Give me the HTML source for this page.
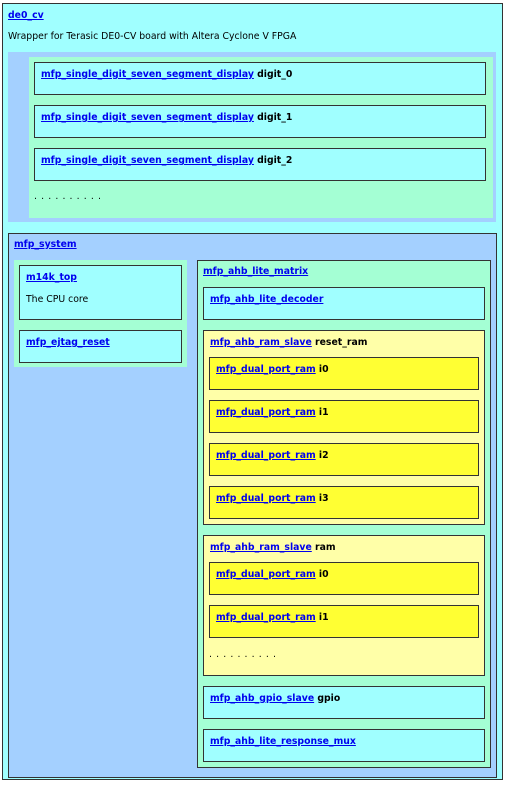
<!DOCTYPE html>
<html><head><meta charset="utf-8"><style>
*{box-sizing:border-box;margin:0;padding:0}
body{width:506px;height:785px;background:#fff;font-family:"DejaVu Sans","Liberation Sans",sans-serif;font-size:9.3px;position:relative;overflow:hidden}
.b{position:absolute}
.bd{border:1px solid #333}
.c{background:#a0ffff}.g{background:#a4ffd4}.bl{background:#a4d0ff}.ly{background:#ffffa8}.y{background:#ffff33}
.t{position:absolute;left:6px;top:6px;line-height:12px;font-weight:bold;white-space:nowrap;color:#000}
a{color:#0000ee;text-decoration:underline}
.p{position:absolute;white-space:nowrap;line-height:12px}
.d{letter-spacing:0.6px}
</style></head><body>
<div class="b bd c" style="left:2px;top:3px;width:501px;height:777px"></div>
<div class="p" style="left:8px;top:10px;font-weight:bold"><a>de0_cv</a></div>
<div class="p" style="left:8px;top:31px">Wrapper for Terasic DE0-CV board with Altera Cyclone V FPGA</div>
<div class="b bl" style="left:8px;top:52px;width:488px;height:170px"></div>
<div class="b g" style="left:29px;top:57px;width:464px;height:161px"></div>
<div class="b bd c" style="left:34px;top:62px;width:452px;height:33px"><div class="t"><a>mfp_single_digit_seven_segment_display</a> digit_0</div></div>
<div class="b bd c" style="left:34px;top:105px;width:452px;height:33px"><div class="t"><a>mfp_single_digit_seven_segment_display</a> digit_1</div></div>
<div class="b bd c" style="left:34px;top:148px;width:452px;height:33px"><div class="t"><a>mfp_single_digit_seven_segment_display</a> digit_2</div></div>
<div class="p d" style="left:34px;top:191px">. . . . . . . . . .</div>

<div class="b bd bl" style="left:8px;top:233px;width:489px;height:545px"></div>
<div class="p" style="left:14px;top:239px;font-weight:bold"><a>mfp_system</a></div>
<div class="b g" style="left:14px;top:260px;width:173px;height:107px"></div>
<div class="b bd c" style="left:19px;top:265px;width:163px;height:55px"><div class="t"><a>m14k_top</a></div><div class="p" style="left:6px;top:28px">The CPU core</div></div>
<div class="b bd c" style="left:19px;top:330px;width:163px;height:33px"><div class="t"><a>mfp_ejtag_reset</a></div></div>

<div class="b bd g" style="left:197px;top:260px;width:294px;height:508px"></div>
<div class="p" style="left:203px;top:266px;font-weight:bold"><a>mfp_ahb_lite_matrix</a></div>
<div class="b bd c" style="left:203px;top:287px;width:282px;height:33px"><div class="t"><a>mfp_ahb_lite_decoder</a></div></div>
<div class="b bd ly" style="left:203px;top:330px;width:282px;height:195px"><div class="t"><a>mfp_ahb_ram_slave</a> reset_ram</div></div>
<div class="b bd y" style="left:209px;top:357px;width:270px;height:33px"><div class="t"><a>mfp_dual_port_ram</a> i0</div></div>
<div class="b bd y" style="left:209px;top:400px;width:270px;height:33px"><div class="t"><a>mfp_dual_port_ram</a> i1</div></div>
<div class="b bd y" style="left:209px;top:443px;width:270px;height:33px"><div class="t"><a>mfp_dual_port_ram</a> i2</div></div>
<div class="b bd y" style="left:209px;top:486px;width:270px;height:33px"><div class="t"><a>mfp_dual_port_ram</a> i3</div></div>
<div class="b bd ly" style="left:203px;top:535px;width:282px;height:141px"><div class="t"><a>mfp_ahb_ram_slave</a> ram</div></div>
<div class="b bd y" style="left:209px;top:562px;width:270px;height:33px"><div class="t"><a>mfp_dual_port_ram</a> i0</div></div>
<div class="b bd y" style="left:209px;top:605px;width:270px;height:33px"><div class="t"><a>mfp_dual_port_ram</a> i1</div></div>
<div class="p d" style="left:209px;top:649px">. . . . . . . . . .</div>
<div class="b bd c" style="left:203px;top:686px;width:282px;height:33px"><div class="t"><a>mfp_ahb_gpio_slave</a> gpio</div></div>
<div class="b bd c" style="left:203px;top:729px;width:282px;height:33px"><div class="t"><a>mfp_ahb_lite_response_mux</a></div></div>
</body></html>
